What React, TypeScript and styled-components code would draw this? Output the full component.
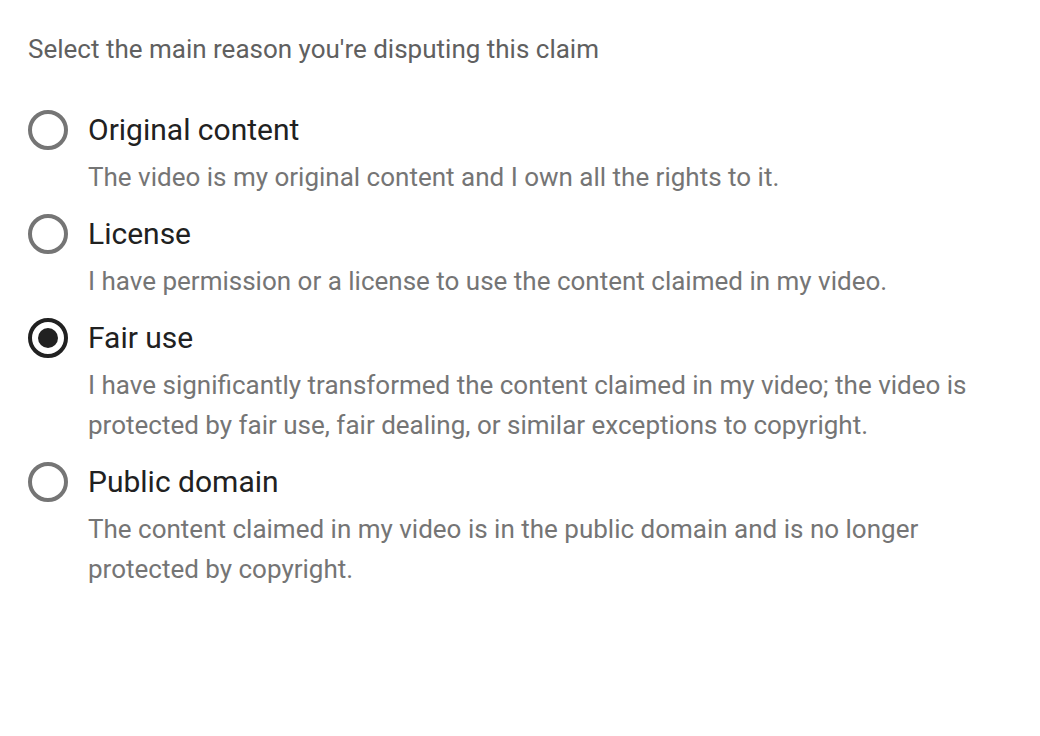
import React, { useState } from "react";
import styled, { createGlobalStyle } from "styled-components";

const GlobalStyle = createGlobalStyle`
  body {
    margin: 0;
    background: #fff;
    font-family: Roboto, "Noto Sans", Arial, sans-serif;
  }
`;

const Page = styled.div`
  padding: 29px 28px;
`;

const Prompt = styled.div`
  font-size: 26px;
  line-height: 40px;
  color: #606060;
  margin-bottom: 41px;
`;

const Options = styled.div`
  display: flex;
  flex-direction: column;
  gap: 17px;
`;

const Option = styled.label`
  display: grid;
  grid-template-columns: 40px 1fr;
  column-gap: 20px;
  row-gap: 7px;
  cursor: pointer;
`;

const Radio = styled.span<{ checked: boolean }>`
  width: 40px;
  height: 40px;
  box-sizing: border-box;
  border-radius: 50%;
  border: 4px solid ${(p) => (p.checked ? "#212121" : "#757575")};
  display: flex;
  align-items: center;
  justify-content: center;

  &::after {
    content: "";
    width: 20px;
    height: 20px;
    border-radius: 50%;
    background: #212121;
    display: ${(p) => (p.checked ? "block" : "none")};
  }
`;

const Title = styled.div`
  font-size: 30px;
  line-height: 40px;
  color: #212121;
`;

const Desc = styled.div`
  grid-column: 2;
  font-size: 26px;
  line-height: 40px;
  color: #757575;
  max-width: 900px;
`;

const reasons = [
  {
    title: "Original content",
    desc: "The video is my original content and I own all the rights to it.",
  },
  {
    title: "License",
    desc: "I have permission or a license to use the content claimed in my video.",
  },
  {
    title: "Fair use",
    desc: "I have significantly transformed the content claimed in my video; the video is protected by fair use, fair dealing, or similar exceptions to copyright.",
  },
  {
    title: "Public domain",
    desc: "The content claimed in my video is in the public domain and is no longer protected by copyright.",
  },
];

const App = () => {
  const [selected, setSelected] = useState(2);

  return (
    <Page>
      <GlobalStyle />
      <Prompt>Select the main reason you're disputing this claim</Prompt>
      <Options>
        {reasons.map((r, i) => (
          <Option key={r.title} onClick={() => setSelected(i)}>
            <Radio checked={selected === i} />
            <Title>{r.title}</Title>
            <Desc>{r.desc}</Desc>
          </Option>
        ))}
      </Options>
    </Page>
  );
};

export default App;
